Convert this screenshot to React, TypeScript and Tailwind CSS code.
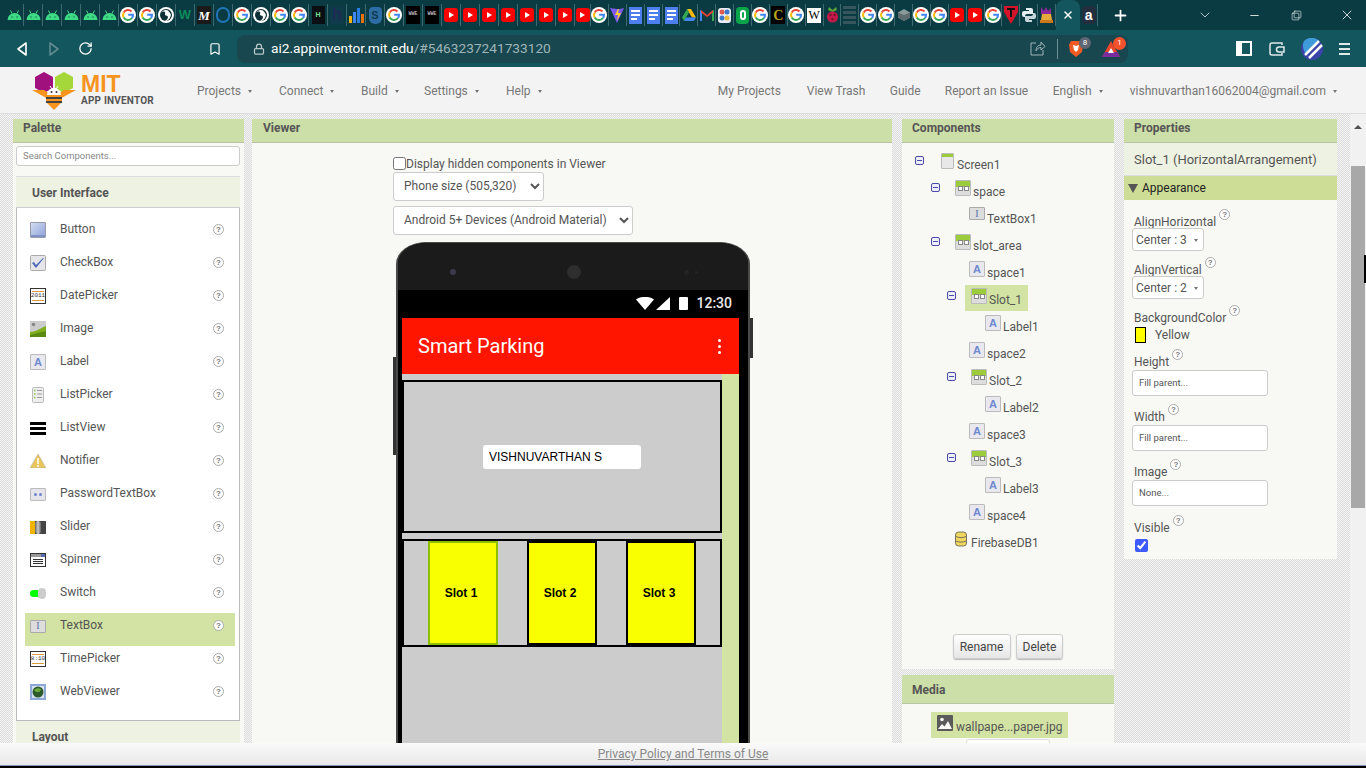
import React from 'react';
import { ChevronDown, Minus, Plus, Square, X, RotateCw, Bookmark, Lock } from 'lucide-react';

const ui = "font-['Roboto',sans-serif]";

// Favicons of the tab strip, in order
const tabs: string[] = [
  'android', 'android', 'android', 'android', 'android', 'android',
  'g', 'g', 'globe', 'w', 'm', 'ring', 'g', 'globe', 'g', 'g', 'h', 'hh', 'bars', 'shield', 'g', 'wwe', 'wwe',
  'yt', 'yt', 'yt', 'yt', 'yt', 'yt', 'yt', 'yt',
  'g', 'vite', 'doc', 'doc', 'doc', 'drive', 'gmail', 'photo', 'green', 'g', 'c', 'g', 'wiki', 'rasp', 'list',
  'g', 'g', 'hex', 'g', 'g', 'yt', 'yt', 'g', 'tesla', 'python', 'bell',
];

const Favicon = ({ k }: { k: string }) => {
  switch (k) {
    case 'android':
      return (
        <svg width="15" height="12" viewBox="0 0 15 12">
          <path d="M.5 11a7 7 0 0 1 14 0z" fill="#3ddc84" />
          <path d="M3.500 1.500l1.500 3M11.500 1.500l-1.500 3" stroke="#3ddc84" strokeWidth="1" />
          <circle cx="5" cy="8" r=".7" fill="#0f5a50" />
          <circle cx="10" cy="8" r=".7" fill="#0f5a50" />
        </svg>
      );
    case 'g':
      return (
        <svg width="16" height="16" viewBox="0 0 16 16">
          <circle cx="8" cy="8" r="8" fill="#fff" />
          <path d="M3.700 5.500A5 5 0 0 1 11.500 4.500" fill="none" stroke="#ea4335" strokeWidth="2" />
          <path d="M3.700 5.500A5 5 0 0 0 3.700 10.500" fill="none" stroke="#fbbc05" strokeWidth="2" />
          <path d="M3.700 10.500A5 5 0 0 0 12 11" fill="none" stroke="#34a853" strokeWidth="2" />
          <path d="M12 11A5 5 0 0 0 13 7.800H8.200" fill="none" stroke="#4285f4" strokeWidth="2" />
        </svg>
      );
    case 'globe':
      return (
        <svg width="16" height="16" viewBox="0 0 16 16">
          <circle cx="8" cy="8" r="8" fill="#fff" />
          <circle cx="8" cy="8" r="6" fill="#0c2f36" />
          <path d="M3 6c3-3 5-1 4 1s3 1 3 3-2 3-3 4c3 0 5-2 6-6-1-3-3-5-5-5-2 0-4 1-5 3z" fill="#fff" />
        </svg>
      );
    case 'w':
      return <span className="font-['Liberation_Sans',sans-serif] text-[13px] font-bold leading-4 text-[#0c8a5c]">W</span>;
    case 'm':
      return <span className="flex h-[18px] w-[14px] items-center justify-center bg-[#1a1a1a] font-['Liberation_Serif',serif] text-[13px] font-bold italic leading-none text-white">M</span>;
    case 'ring':
      return <span className="h-[16px] w-[14px] rounded-full border-2 border-[#1f74b8]" />;
    case 'h':
      return <span className="flex h-[18px] w-[13px] items-center justify-center bg-[#0b0f14] font-['Liberation_Sans',sans-serif] text-[7px] font-bold text-[#7be08f]">H</span>;
    case 'hh':
      return <span className="flex h-[18px] w-[14px] items-center justify-center bg-[#0f3a4a] font-['Liberation_Sans',sans-serif] text-[16px] leading-none text-[#26265a]">h</span>;
    case 'bars':
      return (
        <svg width="15" height="16" viewBox="0 0 15 16">
          <rect x="0" y="9" width="3" height="7" fill="#f4b400" />
          <rect x="4" y="5" width="3" height="11" fill="#4285f4" />
          <rect x="8" y="1" width="3" height="15" fill="#2a7de1" />
          <rect x="12" y="7" width="3" height="9" fill="#e8710a" />
        </svg>
      );
    case 'shield':
      return <span className="flex h-[17px] w-[13px] items-center justify-center rounded-b-md rounded-t-sm bg-[#2e6da4] font-['Liberation_Sans',sans-serif] text-[11px] font-bold text-[#0f3a4a]">S</span>;
    case 'wwe':
      return <span className="flex h-[18px] w-[14px] items-center justify-center bg-black font-['Liberation_Mono',monospace] text-[5px] font-bold text-[#bbb]">WWE</span>;
    case 'yt':
      return (
        <span className="flex h-[14px] w-[14px] items-center justify-center rounded-[3px] bg-[#f00]">
          <span className="h-0 w-0 border-y-[3px] border-l-[5px] border-y-transparent border-l-white" />
        </span>
      );
    case 'vite':
      return (
        <svg width="14" height="17" viewBox="0 0 14 17">
          <path d="M0 1l7 15 7-15-4 1-3 0z" fill="#7c5cf0" />
          <path d="M8 2L5 8h3l-1 6 4-8H8l1-4z" fill="#ffcf33" />
        </svg>
      );
    case 'doc':
      return (
        <span className="flex h-[17px] w-[13px] flex-col justify-center gap-[2px] bg-[#4d80ee] px-[2px]">
          <span className="h-[2px] bg-white" />
          <span className="h-[2px] bg-white" />
          <span className="h-[2px] w-[6px] bg-white" />
        </span>
      );
    case 'drive':
      return (
        <svg width="14" height="13" viewBox="0 0 14 13">
          <path d="M5 0h4l5 8.500H10z" fill="#fbbc05" />
          <path d="M5 0L0 8.500l2 3.500 5-8.500z" fill="#34a853" />
          <path d="M2 12h10l2-3.500H4z" fill="#4285f4" />
        </svg>
      );
    case 'gmail':
      return (
        <svg width="14" height="12" viewBox="0 0 14 12">
          <path d="M0 12V1l2 1v10z" fill="#4285f4" />
          <path d="M14 12V1l-2 1v10z" fill="#34a853" />
          <path d="M1 1l6 5 6-5v2.500L7 8 1 3.500z" fill="#ea4335" />
        </svg>
      );
    case 'photo':
      return (
        <svg width="15" height="17" viewBox="0 0 15 17">
          <rect x="1" y="1" width="13" height="15" rx="3" fill="#e8eef5" />
          <circle cx="5" cy="5" r="2.500" fill="#e05a4f" />
          <circle cx="10" cy="5" r="2.500" fill="#3b78c9" />
          <circle cx="5" cy="11" r="2.500" fill="#3b78c9" />
          <circle cx="10" cy="11" r="2.500" fill="#e8b93c" />
        </svg>
      );
    case 'green':
      return (
        <span className="flex h-[17px] w-[13px] items-center justify-center rounded-[4px] bg-[#0aa54a]">
          <span className="h-[10px] w-[6px] rounded-full border-2 border-white" />
        </span>
      );
    case 'c':
      return <span className="flex h-[18px] w-[14px] items-center justify-center bg-black font-['Liberation_Serif',serif] text-[14px] font-bold text-[#b8a41e]">C</span>;
    case 'wiki':
      return <span className="flex h-[15px] w-[14px] items-center justify-center bg-white font-['Liberation_Serif',serif] text-[12px] leading-none text-black">W</span>;
    case 'rasp':
      return (
        <svg width="13" height="16" viewBox="0 0 13 16">
          <path d="M3 0l3.500 3L10 0l1 3-4.500 2L2 3z" fill="#57a639" />
          <circle cx="6.500" cy="10" r="5.500" fill="#c51a4a" />
          <circle cx="4.500" cy="8" r="1.200" fill="#7a0f2d" />
          <circle cx="8.500" cy="8" r="1.200" fill="#7a0f2d" />
          <circle cx="6.500" cy="12" r="1.200" fill="#7a0f2d" />
        </svg>
      );
    case 'list':
      return (
        <span className="flex w-[13px] flex-col gap-[2px]">
          <span className="h-[3px] bg-[#34565c]" />
          <span className="h-[3px] bg-[#34565c]" />
          <span className="h-[3px] bg-[#34565c]" />
          <span className="h-[3px] bg-[#34565c]" />
        </span>
      );
    case 'hex':
      return (
        <svg width="14" height="14" viewBox="0 0 14 14">
          <path d="M7 1l6 3.500v5L7 13 1 9.500v-5z" fill="#8b9a9e" />
          <path d="M7 7l6-2.500v5L7 13 1 9.500v-5z" fill="#5e6c70" />
        </svg>
      );
    case 'tesla':
      return (
        <svg width="14" height="18" viewBox="0 0 14 18">
          <path d="M0 0h14v6L7 18 0 6z" fill="#d3142a" />
          <path d="M3 3h8M7 3v8" stroke="#111" strokeWidth="2" />
        </svg>
      );
    case 'python':
      return (
        <svg width="14" height="16" viewBox="0 0 14 16">
          <path d="M4 1h5a2 2 0 0 1 2 2v4H5a2 2 0 0 0-2 2v1H2a2 2 0 0 1-2-2V6a2 2 0 0 1 2-2h5V3H4z" fill="#e6eef2" />
          <path d="M10 15H5a2 2 0 0 1-2-2V9h6a2 2 0 0 0 2-2V6h1a2 2 0 0 1 2 2v2a2 2 0 0 1-2 2H7v1h3z" fill="#c7d5dc" />
        </svg>
      );
    default:
      return (
        <svg width="15" height="18" viewBox="0 0 15 18">
          <path d="M2 1l3 4 2-4 2 4 3-3v6H2z" fill="#8e2a9a" />
          <path d="M3 8h9l1 6H2z" fill="#e5a93c" />
          <rect x="1" y="14" width="13" height="3" fill="#c97a1c" />
        </svg>
      );
  }
};

const TabStrip = () => (
  <div className="flex h-[30px] shrink-0 items-center bg-[#0a3b42] pl-[5px]">
    {tabs.map((k, i) => (
      <div
        key={i}
        className={`flex h-[22px] shrink-0 items-center justify-center border-r border-[#3f6a70] ${
          i === 30 ? 'w-[16px]' : i < 30 ? 'w-[19px]' : 'w-[17.900px]'
        }`}
      >
        <Favicon k={k} />
      </div>
    ))}
    <div className="flex h-[30px] w-[24px] shrink-0 items-center justify-center rounded-t-lg bg-[#13565e]">
      <X size={12} strokeWidth={3} className="text-white" />
    </div>
    <div className="flex h-[22px] w-[18px] shrink-0 items-center justify-center border-r border-[#3f6a70]">
      <span className="flex h-[18px] w-[14px] items-center justify-center rounded-sm bg-[#232f3e] font-['Liberation_Sans',sans-serif] text-[14px] font-bold leading-none text-white">a</span>
    </div>
    <Plus size={17} strokeWidth={2.500} className="ml-[14px] text-white" />
    <ChevronDown size={16} strokeWidth={1.200} className="ml-[68px] text-[#d7e2e3]" />
    <Minus size={13} strokeWidth={1.500} className="ml-[35px] text-white" />
    <div className="relative ml-[30px] h-[11px] w-[11px]">
      <Square size={9} strokeWidth={1.500} className="absolute bottom-0 left-0 text-white" />
      <Square size={9} strokeWidth={1.500} className="absolute right-0 top-0 text-white" />
    </div>
    <X size={16} strokeWidth={1.200} className="ml-[37px] text-white" />
  </div>
);

const Toolbar = () => (
  <div className="flex h-[37px] shrink-0 items-center bg-[#13565e]">
    <svg width="12" height="16" viewBox="0 0 12 16" className="ml-[16px] shrink-0">
      <path d="M10 2L2 8l8 6z" fill="none" stroke="#fff" strokeWidth="1.600" strokeLinejoin="round" />
    </svg>
    <svg width="12" height="16" viewBox="0 0 12 16" className="ml-[20px] shrink-0">
      <path d="M2 2l8 6-8 6z" fill="none" stroke="#5f8a8f" strokeWidth="1.600" strokeLinejoin="round" />
    </svg>
    <RotateCw size={15} strokeWidth={2} className="ml-[18px] shrink-0 text-white" />
    <Bookmark size={14} strokeWidth={2} className="ml-[115px] shrink-0 text-white" />
    <div className="ml-[15px] flex h-[28px] w-[891px] shrink-0 items-center rounded-lg bg-[#18474f] pl-[16px]">
      <Lock size={12} strokeWidth={2.500} className="shrink-0 text-[#b7c6c8]" />
      <span className={`${ui} ml-[6px] text-[13.700px] text-[#9fb5b8]`}>
        <span className="text-white">ai2.appinventor.mit.edu</span>/#5463237241733120
      </span>
      <svg width="16" height="15" viewBox="0 0 16 15" className="ml-auto shrink-0">
        <path d="M6 2H1v12h12V9M6 10c0-4 2-6 5-6V1l4 4.500L11 9V6.500C9 6.500 7 7.500 6 10z" fill="none" stroke="#9fb5b8" strokeWidth="1" />
      </svg>
      <span className="ml-[11px] h-[20px] w-px shrink-0 bg-[#6f9195]" />
      <div className="relative ml-[11px] shrink-0">
        <svg width="14" height="17" viewBox="0 0 14 17">
          <path d="M2 1h10l2 4-1 7-6 5-6-5-1-7z" fill="#f15a22" />
          <path d="M4 5l3 1 3-1-1 5-2 2-2-2z" fill="#fff" />
        </svg>
        <span className={`${ui} absolute -right-[8px] -top-[3px] flex h-[12px] w-[12px] items-center justify-center rounded-full bg-[#5d6570] text-[8px] text-white`}>8</span>
      </div>
      <div className="relative ml-[19px] mr-[8px] shrink-0">
        <svg width="18" height="16" viewBox="0 0 18 16">
          <path d="M9 0l9 16H0z" fill="#e8462a" />
          <path d="M0 16l3-5h12l3 5z" fill="#7a2c9e" />
          <path d="M9 7l3 5H6z" fill="#fff" />
        </svg>
        <span className={`${ui} absolute -right-[6px] -top-[4px] flex h-[13px] w-[13px] items-center justify-center rounded-full bg-[#f4512c] text-[8px] text-white`}>1</span>
      </div>
    </div>
    <span className="ml-[108px] h-[15px] w-[16px] shrink-0 border-2 border-white">
      <span className="block h-full w-[4px] bg-white" />
    </span>
    <svg width="16" height="14" viewBox="0 0 16 14" className="ml-[17px] shrink-0">
      <path d="M13 3V1H3a2 2 0 0 0-2 2v8a2 2 0 0 0 2 2h10v-2M15 5v5h-5a2.500 2.500 0 0 1 0-5z" fill="none" stroke="#dfe9ea" strokeWidth="1.500" />
    </svg>
    <svg width="22" height="22" viewBox="0 0 22 22" className="ml-[16px] shrink-0">
      <circle cx="11" cy="11" r="11" fill="#3a44a8" />
      <path d="M3 3a11 11 0 0 1 15-.500L5 16.500C2 12 1 7 3 3z" fill="#3f9bd8" />
      <path d="M18 3L4 17M21 7L8 20" stroke="#fff" strokeWidth="2.500" />
    </svg>
    <span className="ml-[16px] flex w-[11px] shrink-0 flex-col gap-[3px]">
      <span className="h-[2px] bg-[#dfe9ea]" />
      <span className="h-[2px] bg-[#dfe9ea]" />
      <span className="h-[2px] bg-[#dfe9ea]" />
    </span>
  </div>
);

const Logo = () => (
  <div className="ml-[32px] flex w-[165px] shrink-0 items-start">
    <svg width="48" height="40" viewBox="0 0 48 40" className="mt-[3px] shrink-0">
      <path d="M12 0l9 5v11l-9 5-9-5V5z" fill="#a0117e" />
      <path d="M32 0l9 5v11l-9 5-9-5V5z" fill="#a5d63a" />
      <path d="M0 18l12 0 6 4v6zM44 18H32l-6 4v6z" fill="#f7941d" />
      <path d="M14 21h16v9l-8 8-8-8z" fill="#f7941d" />
      <rect x="14" y="25" width="16" height="2" fill="#444" />
      <rect x="14" y="29" width="16" height="2" fill="#444" />
      <path d="M15 23a7 7 0 0 1 14 0z" fill="#fff" />
      <path d="M18 14l2 3M26 14l-2 3" stroke="#fff" strokeWidth="1" />
      <circle cx="19.500" cy="20" r="1" fill="#333" />
      <circle cx="24.500" cy="20" r="1" fill="#333" />
    </svg>
    <div className="ml-[1px] flex flex-col">
      <span className="mt-[6px] font-['Liberation_Sans',sans-serif] text-[23px] font-bold leading-[18px] text-[#f7941d]">MIT</span>
      <span className="mt-[3px] whitespace-nowrap font-['Roboto',sans-serif] text-[10px] font-bold leading-[10px] tracking-[0.2px] text-[#555]">APP INVENTOR</span>
    </div>
  </div>
);

const Caret = () => <span className="ml-[7px] mt-[1px] h-0 w-0 border-x-[2px] border-t-[3px] border-x-transparent border-t-[#777]" />;

const NavItem = ({ label, menu, className }: { label: string; menu?: boolean; className?: string }) => (
  <span className={`flex items-center whitespace-nowrap text-[12px] text-[#777] ${className ?? ''}`}>
    {label}
    {menu && <Caret />}
  </span>
);

const Header = () => (
  <div className={`${ui} flex h-[47px] shrink-0 items-center border-b border-[#ddd] bg-[#f3f3f3]`}>
    <Logo />
    <div className="mt-[1px] flex">
      <NavItem label="Projects" menu className="w-[82px]" />
      <NavItem label="Connect" menu className="w-[82px]" />
      <NavItem label="Build" menu className="w-[63px]" />
      <NavItem label="Settings" menu className="w-[82px]" />
      <NavItem label="Help" menu />
    </div>
    <div className="ml-auto mt-[1px] flex pr-[29px]">
      <NavItem label="My Projects" className="w-[89px]" />
      <NavItem label="View Trash" className="w-[83px]" />
      <NavItem label="Guide" className="w-[55px]" />
      <NavItem label="Report an Issue" className="w-[108px]" />
      <NavItem label="English" menu className="w-[77px]" />
      <NavItem label="vishnuvarthan16062004@gmail.com" menu />
    </div>
  </div>
);

const Help = ({ className }: { className?: string }) => (
  <span className={`flex h-[11px] w-[11px] shrink-0 items-center justify-center rounded-full border border-[#aaa] bg-white font-['Liberation_Sans',sans-serif] text-[8px] font-bold leading-none text-[#777] ${className ?? ''}`}>?</span>
);

const PanelHead = ({ title, pad = 'pl-[10px]' }: { title: string; pad?: string }) => (
  <div className={`h-[24px] shrink-0 border-b border-[#b9c4a0] bg-[#cddfa8] pt-[1px] text-[12px] font-bold leading-4 text-[#555] ${pad}`}>{title}</div>
);

const PaletteIcon = ({ k }: { k: string }) => {
  switch (k) {
    case 'Button':
      return <span className="block h-[16px] w-[16px] rounded-[1px] border border-[#99a] bg-gradient-to-br from-[#d4dcf3] to-[#8ea3d8] shadow-[inset_0_-2px_#7f93c8]" />;
    case 'CheckBox':
      return (
        <svg width="16" height="16" viewBox="0 0 16 16">
          <rect x=".5" y=".5" width="15" height="15" rx="1" fill="#e6e6ea" stroke="#aaa" />
          <path d="M2 8l4 5 8-10-1 0-7 7-2-3z" fill="#4a67b8" />
        </svg>
      );
    case 'DatePicker':
      return <Picker text="2011" />;
    case 'TimePicker':
      return <Picker text="8:10" />;
    case 'Image':
      return (
        <svg width="16" height="16" viewBox="0 0 16 16">
          <rect width="16" height="16" fill="#ccc" />
          <circle cx="3.500" cy="3.500" r="1.800" fill="#888" />
          <path d="M0 16v-5c5 0 9-3 16-6v11z" fill="#7fae1f" />
          <path d="M0 16v-2c6-1 10-3 16-4v6z" fill="#5a8a10" />
        </svg>
      );
    case 'Label':
      return <LabelIcon />;
    case 'ListPicker':
      return (
        <svg width="16" height="16" viewBox="0 0 16 16">
          <rect x="2.500" y=".5" width="11" height="15" rx="1" fill="#eee" stroke="#bbb" />
          <path d="M4 3.500h1.500M4 7h1.500M4 10.500h1.500" stroke="#8cc63f" strokeWidth="1.500" />
          <path d="M7 3.500h5M7 7h5M7 10.500h5" stroke="#999" strokeWidth="1" />
        </svg>
      );
    case 'ListView':
      return (
        <span className="flex w-[16px] flex-col gap-[2px]">
          <span className="h-[3px] bg-black" />
          <span className="h-[3px] bg-black" />
          <span className="h-[3px] bg-black" />
        </span>
      );
    case 'Notifier':
      return (
        <svg width="16" height="14" viewBox="0 0 16 14">
          <path d="M8 0l8 14H0z" fill="#e8c65a" stroke="#aaa" strokeWidth=".5" />
          <path d="M8 4v6M8 11v2" stroke="#fff" strokeWidth="1.500" />
        </svg>
      );
    case 'PasswordTextBox':
      return (
        <span className="flex h-[13px] w-[16px] items-center justify-center gap-[2px] rounded-[1px] border border-[#bbb] bg-[#e4e4ea]">
          <span className="h-[3px] w-[3px] rounded-full bg-[#6f86c8]" />
          <span className="h-[3px] w-[3px] rounded-full bg-[#6f86c8]" />
        </span>
      );
    case 'Slider':
      return (
        <span className="flex h-[13px] w-[16px] items-center bg-[#444]">
          <span className="h-full w-[5px] bg-[#f0b400]" />
          <span className="h-[13px] w-[6px] rounded-sm bg-gradient-to-r from-[#666] via-[#ccc] to-[#666]" />
        </span>
      );
    case 'Spinner':
      return (
        <svg width="16" height="14" viewBox="0 0 16 14">
          <rect x=".5" y=".5" width="15" height="13" fill="#fff" stroke="#333" />
          <rect x="1" y="1" width="10" height="3" fill="#999" />
          <rect x="11" y="1" width="4" height="3" fill="#5a6fb0" />
          <path d="M3 6.500h10M3 8.500h10M3 10.500h10" stroke="#333" strokeWidth="1" />
        </svg>
      );
    case 'Switch':
      return (
        <span className="relative block h-[11px] w-[16px]">
          <span className="absolute left-0 top-[2px] h-[7px] w-[12px] rounded-full bg-[#0f0]" />
          <span className="absolute right-0 top-0 h-[11px] w-[8px] rounded-full bg-[#ccc]" />
        </span>
      );
    case 'TextBox':
      return <TextBoxIcon />;
    default:
      return (
        <svg width="16" height="16" viewBox="0 0 16 16">
          <rect width="16" height="16" fill="#8ea8d8" />
          <rect x="2" y="2" width="12" height="12" fill="#d8e2f2" />
          <circle cx="8" cy="8" r="5.500" fill="#2c5a2c" />
          <path d="M4 6c2-2 5-2 7-1 0 3-4 5-7 1z" fill="#6aa83c" />
        </svg>
      );
  }
};

const Picker = ({ text }: { text: string }) => (
  <span className="flex h-[16px] w-[16px] flex-col items-center justify-center border border-[#333] bg-white font-['Liberation_Mono',monospace] text-[6px] leading-none text-[#333]">
    <span className="mb-[1px] h-px w-[12px] bg-[#d99a3c]" />
    {text}
    <span className="mt-[1px] h-px w-[12px] bg-[#d99a3c]" />
  </span>
);

const LabelIcon = () => (
  <span className="flex h-[16px] w-[16px] items-center justify-center rounded-[1px] border border-[#bbb] bg-[#e8e8ee] font-['Liberation_Sans',sans-serif] text-[11px] font-bold leading-none text-[#6f8ad0]">A</span>
);

const TextBoxIcon = () => (
  <span className="flex h-[13px] w-[16px] items-center justify-center rounded-[1px] border border-[#aaa] bg-[#ddd] font-['Liberation_Serif',serif] text-[10px] leading-none text-[#5a6fb0]">I</span>
);

const paletteItems = ['Button', 'CheckBox', 'DatePicker', 'Image', 'Label', 'ListPicker', 'ListView', 'Notifier', 'PasswordTextBox', 'Slider', 'Spinner', 'Switch', 'TextBox', 'TimePicker', 'WebViewer'];

const Palette = () => (
  <div className="flex w-[231px] shrink-0 flex-col overflow-hidden bg-[#f8f9f4]">
    <PanelHead title="Palette" />
    <div className="ml-[3px] mr-[4px] pt-[3px]">
      <div className="flex h-[20px] items-center rounded-[3px] border border-[#ccc] bg-white pl-[6px] text-[9.500px] text-[#888]">Search Components...</div>
    </div>
    <div className="ml-[3px] mr-[4px] mt-[10px] flex h-[32px] shrink-0 items-center border-b border-t border-[#ccc] border-t-[#ddd] bg-[#eef2e2] pl-[16px] pt-[2px] text-[12px] font-bold text-[#555]">User Interface</div>
    <div className="ml-[3px] mr-[4px] h-[513px] shrink-0 border-x border-b border-[#bbb] bg-white pt-[9px]">
      {paletteItems.map((name) => (
        <div key={name} className={`ml-[8px] mr-[4px] flex h-[33px] items-start pl-[5px] ${name === 'TextBox' ? 'bg-[#d2e3a3]' : ''}`}>
          <span className="mt-[5px] flex h-[16px] w-[16px] shrink-0 items-center justify-center"><PaletteIcon k={name} /></span>
          <span className="ml-[14px] mt-[4px] text-[12px] leading-4 text-[#555]">{name}</span>
          <Help className="ml-auto mr-[11px] mt-[7px]" />
        </div>
      ))}
    </div>
    <div className="ml-[3px] mr-[4px] flex-1 bg-[#eef2e2] pl-[16px] pt-[8px] text-[12px] font-bold leading-4 text-[#555]">Layout</div>
  </div>
);

const Phone = () => (
  <div className="relative ml-[3px] mt-[7px] w-[354px] shrink-0 overflow-visible">
    <span className="absolute -left-[3px] top-[115px] h-[98px] w-[3px] bg-[#333]" />
    <span className="absolute -right-[3px] top-[76px] h-[40px] w-[3px] bg-[#333]" />
    <div className="border-x-2 border-t border-[#4a4a4a] bg-black [border-radius:30px_30px_0_0/22px_22px_0_0]">
      <div className="relative h-[47px] bg-[#1b1b1b] [border-radius:28px_28px_0_0/20px_20px_0_0]">
        <span className="absolute left-[52px] top-[26px] h-[6px] w-[6px] rounded-full bg-[#3a3a4a]" />
        <span className="absolute left-[169px] top-[22px] h-[14px] w-[14px] rounded-full bg-[#2e2e2e]" />
        <span className="absolute left-[286px] top-[27px] h-[5px] w-[5px] rounded-full bg-[#242424]" />
        <span className="absolute left-[297px] top-[28px] h-[3px] w-[3px] rounded-full bg-[#242424]" />
      </div>
      <div className="flex h-[28px] items-center justify-end pb-[2px] pr-[16px]">
        <svg width="18" height="13" viewBox="0 0 18 13" className="mr-[2px]"><path d="M0 2.500C5-1 13-1 18 2.500L9 13z" fill="#fff" /></svg>
        <svg width="14" height="13" viewBox="0 0 14 13" className="mr-[9px]"><path d="M14 0v13H0z" fill="#fff" /></svg>
        <span className="mr-[8px] h-[13px] w-[9px] rounded-[1px] bg-white" />
        <span className="font-['Roboto',sans-serif] text-[14px] font-medium leading-none text-[#e8e8e8]">12:30</span>
      </div>
      <div className="ml-[4px] mr-[9px]">
        <div className="flex h-[56px] items-center justify-between bg-[#ff1500] pl-[16px] pr-[18px]">
          <span className="font-['Roboto',sans-serif] text-[20px] text-white">Smart Parking</span>
          <span className="flex flex-col gap-[3px]">
            <span className="h-[3px] w-[3px] rounded-full bg-white" />
            <span className="h-[3px] w-[3px] rounded-full bg-white" />
            <span className="h-[3px] w-[3px] rounded-full bg-white" />
          </span>
        </div>
        <div className="flex h-[420px]">
          <div className="w-[320px] bg-[#ccc] pt-[6px]">
            <div className="flex h-[153px] items-center justify-center border-2 border-black">
              <div className="flex h-[24px] w-[158px] items-center rounded-[3px] bg-white pl-[6px] font-['Liberation_Sans',sans-serif] text-[12px] text-black">VISHNUVARTHAN S</div>
            </div>
            <div className="mt-[6px] flex h-[108px] gap-[29px] border-2 border-black pl-[24px]">
              {['Slot 1', 'Slot 2', 'Slot 3'].map((s, i) => (
                <div key={s} className={`flex w-[70px] items-center justify-center border-2 bg-[#faff00] pr-[4px] font-['Liberation_Sans',sans-serif] text-[12px] font-bold text-black ${i === 0 ? 'border-[#8cbf00]' : 'border-black'}`}>{s}</div>
              ))}
            </div>
          </div>
          <div className="w-[17px] bg-[#d2e3a3]" />
        </div>
      </div>
    </div>
  </div>
);

const Viewer = () => (
  <div className="flex w-[640px] shrink-0 flex-col overflow-hidden bg-[#f8f9f4]">
    <PanelHead title="Viewer" pad="pl-[11px]" />
    <div className="flex flex-col items-start pl-[141px] pt-[12px] text-[12px] text-[#555]">
      <label className="flex h-[16px] items-center">
        <input type="checkbox" className="m-0 h-[13px] w-[13px]" />
        <span className="mt-[1px]">Display hidden components in Viewer</span>
      </label>
      <select defaultValue="p" className="mt-[1px] h-[29px] w-[151px] rounded-[3px] border border-[#ccc] bg-white pb-[2px] pl-[6px] text-[12px] text-[#555]">
        <option value="p">Phone size (505,320)</option>
      </select>
      <select defaultValue="a" className="mt-[5px] h-[29px] w-[240px] rounded-[3px] border border-[#ccc] bg-white pb-[2px] pl-[6px] text-[12px] text-[#555]">
        <option value="a">Android 5+ Devices (Android Material)</option>
      </select>
      <Phone />
    </div>
  </div>
);

const ArrangementIcon = ({ green }: { green?: boolean }) => (
  <span className={`flex h-[16px] w-[16px] items-center justify-center gap-[1px] rounded-[1px] border border-[#bbb] ${green ? 'bg-gradient-to-b from-[#9ccc3c] from-40% to-[#ddd] to-40%' : 'bg-[#ddd]'}`}>
    <span className="h-[5px] w-[5px] border border-[#888] bg-white" />
    <span className="h-[5px] w-[5px] border border-[#888] bg-white" />
  </span>
);

type TreeRow = { name: string; kind: string; pad: string; minus?: string; on?: boolean };

const tree: TreeRow[] = [
  { name: 'Screen1', kind: 'screen', pad: 'pl-[13px]', minus: 'mr-[11px]' },
  { name: 'space', kind: 'arr', pad: 'pl-[29px]', minus: 'mr-[9px]' },
  { name: 'TextBox1', kind: 'text', pad: 'pl-[61px]' },
  { name: 'slot_area', kind: 'arr', pad: 'pl-[29px]', minus: 'mr-[9px]' },
  { name: 'space1', kind: 'label', pad: 'pl-[61px]' },
  { name: 'Slot_1', kind: 'arr', pad: 'pl-[45px]', minus: 'mr-[9px]', on: true },
  { name: 'Label1', kind: 'label', pad: 'pl-[77px]' },
  { name: 'space2', kind: 'label', pad: 'pl-[61px]' },
  { name: 'Slot_2', kind: 'arr', pad: 'pl-[45px]', minus: 'mr-[9px]' },
  { name: 'Label2', kind: 'label', pad: 'pl-[77px]' },
  { name: 'space3', kind: 'label', pad: 'pl-[61px]' },
  { name: 'Slot_3', kind: 'arr', pad: 'pl-[45px]', minus: 'mr-[9px]' },
  { name: 'Label3', kind: 'label', pad: 'pl-[77px]' },
  { name: 'space4', kind: 'label', pad: 'pl-[61px]' },
  { name: 'FirebaseDB1', kind: 'db', pad: 'pl-[47px]' },
];

const TreeIcon = ({ kind }: { kind: string }) => {
  if (kind === 'arr') return <ArrangementIcon green />;
  if (kind === 'text') return <span className="flex h-[16px] items-start"><TextBoxIcon /></span>;
  if (kind === 'label') return <LabelIcon />;
  if (kind === 'screen')
    return <span className="block h-[16px] w-[13px] rounded-[1px] border border-[#bbb] bg-gradient-to-b from-[#9ccc3c] from-20% to-[#e8e8e8] to-20%" />;
  return (
    <svg width="12" height="16" viewBox="0 0 12 16">
      <rect x=".5" y="1" width="11" height="14" rx="3" fill="#f0d860" stroke="#555" strokeWidth=".8" />
      <path d="M1 5.500c3 1.500 7 1.500 10 0M1 10c3 1.500 7 1.500 10 0" fill="none" stroke="#555" strokeWidth=".8" />
    </svg>
  );
};

const Components = () => (
  <div className="flex h-[550px] shrink-0 flex-col bg-[#f8f9f4]">
    <PanelHead title="Components" />
    <div className="pt-[7px]">
      {tree.map((r) => (
        <div key={r.name} className={`flex h-[27px] items-start ${r.pad}`}>
          {r.minus && <span className={`mt-[6px] flex h-[9px] w-[9px] shrink-0 items-center justify-center rounded-[2px] border border-[#4a4aa8] bg-[#eef] ${r.minus}`}><span className="h-px w-[5px] bg-[#4a4aa8]" /></span>}
          <span className={`flex h-[26px] items-start px-[6px] pt-[3px] ${r.on ? 'bg-[#d2e3a3]' : ''}`}>
            <TreeIcon kind={r.kind} />
            <span className={`mt-[4px] text-[12px] leading-4 text-[#555] ${r.kind === 'db' ? 'ml-[4px]' : r.kind === 'screen' ? 'ml-[3px]' : 'ml-[2px]'}`}>{r.name}</span>
          </span>
        </div>
      ))}
    </div>
    <div className="mb-[10px] mt-auto flex justify-center gap-[5px]">
      {['Rename', 'Delete'].map((b) => (
        <div key={b} className="flex h-[25px] items-center rounded-[3px] border border-[#ccc] bg-gradient-to-b from-white to-[#e6e6e6] px-[6px] text-[12px] text-[#444] shadow-[0_1px_1px_#bbb]">{b}</div>
      ))}
    </div>
  </div>
);

const Media = () => (
  <div className="mt-[6px] flex flex-1 flex-col overflow-hidden bg-[#f8f9f4]">
    <div className="flex h-[29px] shrink-0 items-center border-b border-[#b9c4a0] bg-[#cddfa8] pl-[10px] pt-[1px] text-[12px] font-bold text-[#555]">Media</div>
    <div className="ml-[29px] mt-[8px] flex h-[26px] w-[137px] shrink-0 items-start bg-[#d2e3a3] pl-[6px] pt-[3px]">
      <svg width="16" height="16" viewBox="0 0 16 16" className="shrink-0">
        <rect width="16" height="16" rx="1" fill="#5a5a5a" />
        <circle cx="5" cy="4.500" r="1.800" fill="#f8f9f4" />
        <path d="M1 14l4-5 2.500 2.500L11 6l4 8z" fill="#f8f9f4" />
      </svg>
      <span className="ml-[3px] mt-[4px] whitespace-nowrap text-[12px] leading-4 text-[#555]">wallpape...paper.jpg</span>
    </div>
    <div className="ml-[64px] mt-[1px] h-[8px] w-[84px] shrink-0 rounded-t-[3px] border border-[#ddd] bg-white" />
  </div>
);

const PropLabel = ({ text, className }: { text: string; className?: string }) => (
  <div className={`flex h-[16px] items-start text-[12px] leading-5 text-[#555] ${className ?? ''}`}>
    {text}
    <Help className="-mt-[3px] ml-[3px]" />
  </div>
);

const PropSelect = ({ text }: { text: string }) => (
  <div className="-ml-[2px] flex h-[23px] w-[72px] items-center rounded-[3px] border border-[#ccc] bg-white pl-[3px] text-[12px] text-[#555]">
    {text}
    <Caret />
  </div>
);

const PropInput = ({ text }: { text: string }) => (
  <div className="-ml-[2px] mt-[2px] flex h-[26px] w-[136px] items-center rounded-[3px] border border-[#ccc] bg-white pl-[6px] text-[9.500px] text-[#555]">{text}</div>
);

const Properties = () => (
  <div className="flex h-[440px] w-[213px] shrink-0 flex-col bg-[#f8f9f4]">
    <PanelHead title="Properties" />
    <div className="flex h-[33px] shrink-0 items-center border-b border-[#ddd] bg-[#eef2e2] pl-[10px] pt-[1px] text-[13px] text-[#555]">Slot_1 (HorizontalArrangement)</div>
    <div className="flex h-[24px] shrink-0 items-center bg-[#cddd96] pl-[4px] text-[12px] text-[#222]">
      <span className="mr-[4px] h-0 w-0 border-x-[5px] border-t-[9px] border-x-transparent border-t-[#555]" />
      Appearance
    </div>
    <div className="flex flex-col items-start pl-[10px] pt-[12px]">
      <PropLabel text="AlignHorizontal" />
      <PropSelect text="Center : 3" />
      <PropLabel text="AlignVertical" className="mt-[9px]" />
      <PropSelect text="Center : 2" />
      <PropLabel text="BackgroundColor" className="mt-[9px]" />
      <div className="flex h-[21px] items-center text-[12px] text-[#555]">
        <span className="ml-[1px] mr-[9px] h-[16px] w-[11px] border border-black bg-[#ff0]" />
        Yellow
      </div>
      <PropLabel text="Height" className="mt-[7px]" />
      <PropInput text="Fill parent..." />
      <PropLabel text="Width" className="mt-[11px]" />
      <PropInput text="Fill parent..." />
      <PropLabel text="Image" className="mt-[11px]" />
      <PropInput text="None..." />
      <PropLabel text="Visible" className="mt-[12px]" />
      <input type="checkbox" defaultChecked className="ml-[1px] mt-[5px] h-[13px] w-[13px] accent-[#3d5afe]" />
    </div>
  </div>
);

const Scrollbar = () => (
  <div className="relative ml-auto flex h-full w-[16px] shrink-0 flex-col items-center bg-[#f1f1f1] pt-[11px]">
    <span className="h-0 w-0 border-x-[4px] border-b-[4px] border-x-transparent border-b-[#505050]" />
    <span className="mt-[37px] h-[342px] w-[14px] bg-[#a8a8a8]" />
    <span className="absolute right-0 top-[141px] h-[28px] w-[2px] bg-black" />
  </div>
);

export default function App() {
  return (
    <div className={`${ui} flex h-[768px] w-[1366px] flex-col overflow-hidden bg-[#ececec]`}>
      <TabStrip />
      <Toolbar />
      <Header />
      <div className="flex min-h-0 flex-1 overflow-hidden pl-[13px] [background:repeating-conic-gradient(#dcdcdc_0_25%,#f4f4f4_0_50%)_0_0/2px_2px]">
        <div className="mt-[5px] flex gap-[8px]">
          <Palette />
          <Viewer />
        </div>
        <div className="ml-[10px] mt-[5px] flex w-[212px] shrink-0 flex-col">
          <Components />
          <Media />
        </div>
        <div className="ml-[10px] mt-[5px]">
          <Properties />
        </div>
        <Scrollbar />
      </div>
      <div className="flex h-[22px] shrink-0 items-center justify-center bg-gradient-to-b from-[#fafafa] to-[#e8e8e8] text-[12px] text-[#888] underline">Privacy Policy and Terms of Use</div>
      <div className="h-[3px] shrink-0 border-t border-[#8890c0] bg-black" />
    </div>
  );
}
